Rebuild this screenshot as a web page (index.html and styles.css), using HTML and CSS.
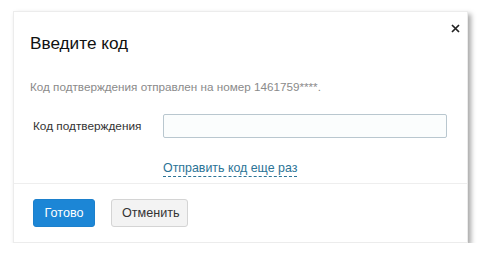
FILE: index.html
```html
<!DOCTYPE html>
<html lang="ru">
<head>
<meta charset="utf-8">
<link rel="stylesheet" href="styles.css">
</head>
<body>
<div class="dialog">
  <div class="header">
    <h1 class="title">Введите код</h1>
    <span class="close">
      <svg width="9" height="9" viewBox="0 0 9 9"><path d="M1 1L8 8M8 1L1 8" stroke="#222" stroke-width="1.7" fill="none"/></svg>
    </span>
  </div>
  <div class="body">
    <p class="info">Код подтверждения отправлен на номер 1461759****.</p>
    <div class="row">
      <label class="label">Код подтверждения</label>
      <input class="input" type="text">
    </div>
    <div class="row link-row">
      <span class="label"></span>
      <a class="resend">Отправить код еще раз</a>
    </div>
  </div>
  <div class="footer">
    <button class="btn primary">Готово</button>
    <button class="btn">Отменить</button>
  </div>
</div>
</body>
</html>
```
FILE: styles.css
```css
html, body {
  margin: 0;
  background: #fff;
}
body {
  padding: 11px 0 0 13px;
  font-family: "Liberation Sans", Arial, sans-serif;
}
.dialog {
  width: 455px;
  height: 232px;
  background: #fff;
  border: 1px solid #ececec;
  box-sizing: border-box;
  box-shadow: 3px 3px 5px rgba(0,0,0,0.35);
  display: flex;
  flex-direction: column;
}
.header {
  display: flex;
  justify-content: space-between;
  align-items: flex-start;
  padding: 20px 7px 0 16px;
}
.title {
  margin: 0;
  font-size: 17.2px;
  font-weight: normal;
  line-height: 22px;
  color: #111;
}
.close {
  margin-top: -8px;
  display: flex;
}
.body {
  padding: 0 0 0 16px;
  flex: 1;
  border-bottom: 1px solid #eeeeee;
}
.info {
  margin: 25px 0 0;
  font-size: 11.7px;
  line-height: 15px;
  color: #8a8a8a;
}
.row {
  display: flex;
  align-items: center;
  margin-top: 20px;
}
.label {
  width: 130px;
  padding-left: 3px;
  font-size: 11.8px;
  color: #333;
}
.input {
  width: 284px;
  height: 24px;
  box-sizing: border-box;
  border: 1px solid #b9c7cf;
  border-radius: 2px;
  background: #fbfdfd;
  margin: 0;
}
.link-row {
  margin-top: 22px;
}
.resend {
  font-size: 12.4px;
  line-height: 16px;
  color: #2b7396;
  text-decoration: none;
  border-bottom: 1px dashed #2b7396;
}
.footer {
  display: flex;
  gap: 16px;
  padding: 15px 0 15px 19px;
}
.btn {
  height: 28px;
  padding: 0 10px;
  font-family: "Liberation Sans", Arial, sans-serif;
  font-size: 12.6px;
  border-radius: 3px;
  border: 1px solid #d4d4d4;
  background: #f3f3f3;
  color: #333;
}
.btn.primary {
  width: 62px;
  background: #1c86d6;
  border-color: #1c80cc;
  color: #fff;
}
.btn:not(.primary) {
  width: 77px;
}
```
